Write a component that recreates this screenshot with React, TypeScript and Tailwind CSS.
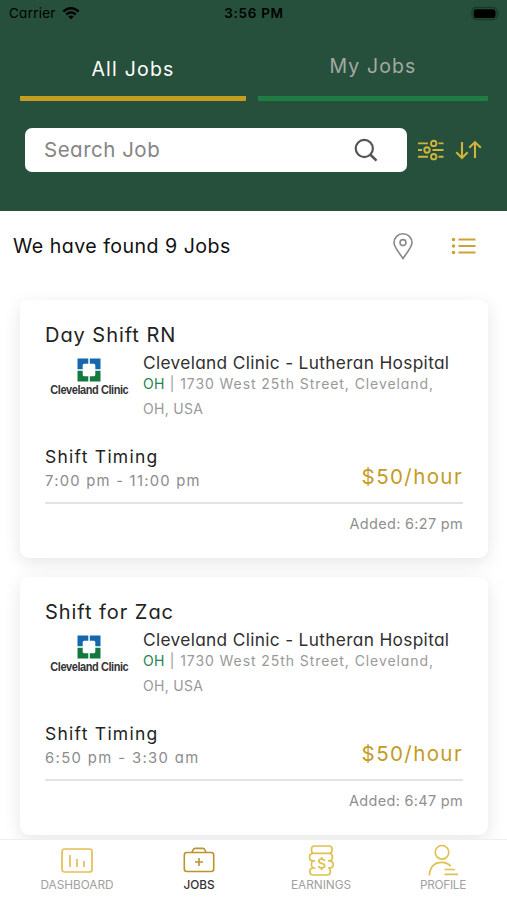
import React from 'react'

type Job = {
  title: string
  timing: string
  timingClass: string
  added: string
}

const jobs: Job[] = [
  {
    title: 'Day Shift RN',
    timing: '7:00 pm - 11:00 pm',
    timingClass: 'tracking-[1.25px]',
    added: 'Added: 6:27 pm',
  },
  {
    title: 'Shift for Zac',
    timing: '6:50 pm - 3:30 am',
    timingClass: 'tracking-[1.38px]',
    added: 'Added: 6:47 pm',
  },
]

const StatusBar: React.FC = () => (
  <div className="grid h-[28px] grid-cols-3 items-center pl-[9px] pr-[6px] text-[13.5px] leading-none text-black">
    <div className="flex items-center gap-[6px]">
      <span className="tracking-[0.25px]">Carrier</span>
      <svg className="-mt-[2px]" width="18" height="14" viewBox="0 0 18 14">
        <path d="M0.5 4.7C5.2-.4 12.8-.4 17.5 4.7L15.7 6.5C12 2.6 6 2.6 2.3 6.5Z" />
        <path d="M3.4 7.6C6.5 4.3 11.5 4.3 14.6 7.6L12.8 9.4C10.7 7.2 7.3 7.2 5.2 9.4Z" />
        <path d="M6.3 10.5C7.8 9 10.2 9 11.7 10.5L9 13.2Z" />
      </svg>
    </div>
    <span className="-ml-[2px] text-center font-semibold tracking-[0.7px]">3:56 PM</span>
    <svg className="-mt-px justify-self-end" width="30" height="16" viewBox="0 0 30 16">
      <rect x="1" y="1.5" width="25" height="12" rx="4" fill="none" stroke="#153c2a" strokeWidth="1.3" />
      <rect x="2.7" y="3.2" width="21.8" height="8.8" rx="2.2" />
      <path d="M27.5 5.4q2 2 0 4.2z" fill="#153c2a" />
    </svg>
  </div>
)

const Header: React.FC = () => (
  <header className="h-[211px] shrink-0 bg-[#26503b]">
    <StatusBar />
    <div className="flex gap-[12px] pl-[20px] pr-[19px]">
      <div className="h-[73px] w-[226px] rounded-[1px] border-b-[5px] border-[#c39e20] pt-[29px] text-center text-[19.5px] leading-[24px] tracking-[1.2px] text-white">
        All Jobs
      </div>
      <div className="h-[73px] flex-1 rounded-[1px] border-b-[5px] border-[#1f7c43] pt-[26px] text-center text-[19.5px] leading-[24px] tracking-[1.1px] text-[#a3aaa5]">
        My Jobs
      </div>
    </div>
    <div className="mt-[27px] flex items-center pl-[25px]">
      <div className="flex h-[44px] w-[382px] items-center justify-between rounded-[7px] bg-white pl-[19px] pr-[29px] text-[20.5px] text-[#858585]">
        <span className="tracking-[0.5px]">Search Job</span>
        <svg width="24" height="24" viewBox="0 0 24 24" fill="none" stroke="#555" strokeWidth="2.2">
          <circle cx="10.3" cy="10.5" r="8.6" />
          <path d="M16.5 16.8l6 5.8" strokeWidth="2.6" />
        </svg>
      </div>
      <svg className="ml-[10px]" width="27" height="22" viewBox="0 0 27 22" fill="none" stroke="#cfb33c" strokeWidth="1.9">
        <path d="M1 4.4h10M21.5 4.4h5M1 11h4M15.5 11h11M1 17.7h10M21.5 17.7h5" />
        <circle cx="16.7" cy="4.4" r="2.7" />
        <circle cx="10" cy="11" r="2.7" />
        <circle cx="16.7" cy="17.7" r="2.7" />
      </svg>
      <svg className="ml-[11px]" width="27" height="20" viewBox="0 0 27 20" fill="none" stroke="#cfb33c" strokeWidth="2.1">
        <path d="M7 2v16M1.3 12.2L7 17.9l5.7-5.7M20 18V2.2M14.2 7.8L20 2.1l5.8 5.7" />
      </svg>
    </div>
  </header>
)

const ClinicLogo: React.FC = () => (
  <div className="flex w-[88px] flex-col items-center pt-[7px]">
    <svg width="24" height="24" viewBox="0 0 24 24">
      <path d="M.5.5h10.8v5.2H7.2q-1.5 0-1.5 1.5v4.1H.5zM12.8.5h10.7v10.8h-5.2V7.2q0-1.5-1.5-1.5h-4z" fill="#1469ae" />
      <path d="M.5 12.8h5.2v4q0 1.5 1.5 1.5h4.1v5.2H.5zM18.3 12.8h5.2v10.7H12.8v-5.2h4q1.5 0 1.5-1.5z" fill="#127940" />
    </svg>
    <span className="mt-px scale-x-[0.88] whitespace-nowrap font-['Liberation_Sans',sans-serif] text-[12.5px] font-bold leading-[15px] tracking-[-0.5px] text-[#333]">
      Cleveland Clinic
    </span>
  </div>
)

const JobCard: React.FC<{ job: Job }> = ({ job }) => (
  <article className="h-[258px] shrink-0 rounded-[9px] bg-white px-[25px] pt-[23px] shadow-[0_5px_18px_rgba(0,0,0,0.1)]">
    <h2 className="h-[28px] text-[20px] leading-[25px] tracking-[0.95px] text-[#222]">{job.title}</h2>
    <div className="flex h-[94px] gap-[10px]">
      <ClinicLogo />
      <div className="whitespace-nowrap">
        <h3 className="h-[21px] text-[17.3px] leading-[24px] tracking-[0.33px] text-[#303030]">
          Cleveland Clinic - Lutheran Hospital
        </h3>
        <p className="text-[14px] leading-[24.5px] tracking-[0.92px] text-[#999]">
          <span className="tracking-[0.4px] text-[#24854c]">OH</span> | 1730 West 25th Street, Cleveland,
          <br />
          <span className="tracking-[0.3px]">OH, USA</span>
        </p>
      </div>
    </div>
    <div className="flex h-[59px] items-center justify-between border-b-2 border-[#e3e3e3]">
      <div className="-mt-[10px]">
        <h4 className="text-[17.5px] leading-[24px] tracking-[1.25px] text-[#222]">Shift Timing</h4>
        <p className={`text-[14.8px] leading-[24px] text-[#8c8c8c] ${job.timingClass}`}>{job.timing}</p>
      </div>
      <span className="mt-[6px] text-[20.5px] leading-[24px] tracking-[1.4px] text-[#c29c24]">$50/hour</span>
    </div>
    <p className="mt-[8px] text-right text-[14.5px] leading-[24px] tracking-[0.3px] text-[#8f8f8f]">{job.added}</p>
  </article>
)

const TabBar: React.FC = () => (
  <nav className="relative grid h-[61px] shrink-0 grid-cols-[122px_122px_122px_122px] border-t border-[#efefef] bg-white pl-[16px] pt-[4px] text-[11.8px] leading-[15px] text-[#a0a0a0]">
    <div className="flex flex-col items-center">
      <svg width="34" height="34" viewBox="0 0 34 34" fill="none" stroke="#e5bd54" strokeWidth="1.7">
        <rect x="2" y="5" width="30" height="23" rx="2.5" />
        <path d="M10 11v12M17 15v8M24 17v6" />
      </svg>
      <span>DASHBOARD</span>
    </div>
    <div className="flex flex-col items-center text-[#333]">
      <svg width="34" height="34" viewBox="0 0 34 34" fill="none" stroke="#b8942e" strokeWidth="1.6">
        <rect x="2.3" y="8.5" width="29.4" height="19" rx="2.5" />
        <path d="M10 8.5l1-2.5q.7-1.6 2.3-1.6h7.4q1.6 0 2.3 1.6l1 2.5M17 14v8M13 18h8" />
      </svg>
      <span className="font-medium">JOBS</span>
    </div>
    <div className="flex flex-col items-center">
      <svg width="34" height="34" viewBox="0 0 34 34" fill="none" stroke="#e0c04e" strokeWidth="1.7">
        <rect x="7.5" y="2" width="20.5" height="7.4" rx="2.8" />
        <path d="M9 9.4Q5.5 9.8 5.5 13.2 5.5 16.7 9 16.9H11.2M26.2 9.4Q28.4 10.2 28.4 13.2 28.4 16.7 25 16.9H24" />
        <path d="M9 16.9Q7.4 17.6 7.4 20.3 7.4 23.2 9 24H11.5M25.5 16.9Q29.2 17.3 29.2 20.5 29.2 23.8 25.5 24H24" />
        <path d="M9 24Q5.8 24.3 5.8 27.5 5.8 31 9.2 31H23.2Q26.4 31 26.4 27.5 26.4 25 25 24" />
        <path d="M20.6 17q-.5-1.9-3-1.9-2.8 0-2.8 2 0 1.8 2.8 2.2 3.1.5 3.1 2.5 0 2.1-3 2.1-2.7 0-3.1-1.9M17.7 13V15M17.7 24v2.2" />
      </svg>
      <span>EARNINGS</span>
    </div>
    <div className="flex flex-col items-center">
      <svg width="34" height="34" viewBox="0 0 34 34" fill="none" stroke="#e0c04e" strokeWidth="1.7">
        <circle cx="16" cy="8.3" r="6.8" />
        <path d="M3.3 31.5Q4.3 18.3 16 18.3q5.2 0 8.7 3.8M18.5 25.5h10.3M18.5 30.4h13.6" />
      </svg>
      <span className="-tracking-[0.3px]">PROFILE</span>
    </div>
  </nav>
)

const App: React.FC = () => {
  return (
    <div className="flex h-[900px] w-[507px] flex-col overflow-hidden bg-white font-['Inter','Noto_Sans',sans-serif] [font-feature-settings:'cv11']">
      <Header />
      <div className="flex h-[70px] shrink-0 items-center pl-[13px] pr-[30px]">
        <p className="flex-1 text-[19.6px] leading-[24px] tracking-[0.47px] text-[#111]">We have found 9 Jobs</p>
        <svg width="20" height="27" viewBox="0 0 20 27" fill="none" stroke="#888" strokeWidth="1.6">
          <path d="M10 25.5C7.6 21.4 1 14.5 1 9.8a9 9 0 0 1 18 0C19 14.5 12.4 21.4 10 25.5z" />
          <circle cx="10" cy="9.6" r="3" />
        </svg>
        <svg className="ml-[38px]" width="26" height="18" viewBox="0 0 26 18" stroke="#cda23a" strokeWidth="1.9" fill="#cda23a">
          <path d="M7.5 2.5h17M7.5 9h17M7.5 15.5h17" />
          <path d="M2.5 2.5h.01M2.5 9h.01M2.5 15.5h.01" strokeWidth="3.6" strokeLinecap="round" />
        </svg>
      </div>
      <main className="flex min-h-0 flex-1 flex-col gap-[19px] overflow-hidden pl-[20px] pr-[19px] pt-[19px]">
        {jobs.map((job) => (
          <JobCard key={job.title} job={job} />
        ))}
      </main>
      <TabBar />
    </div>
  )
}

export default App
